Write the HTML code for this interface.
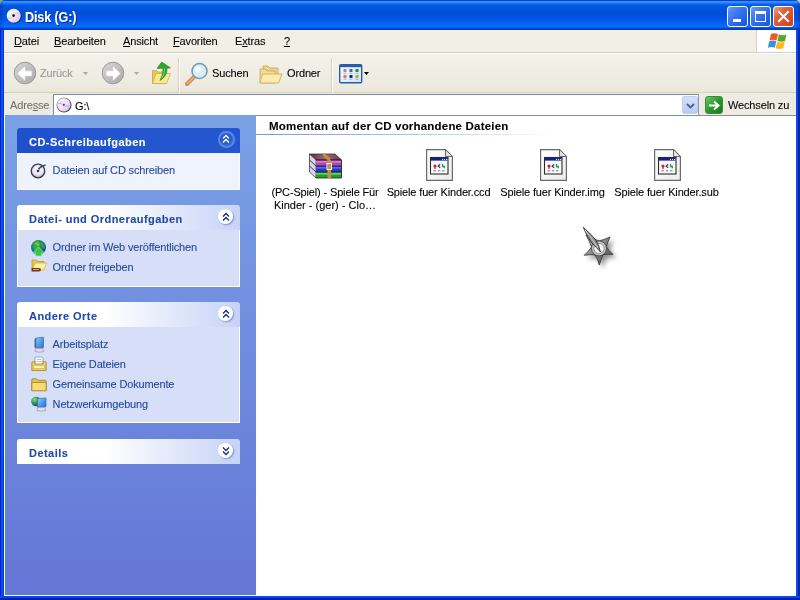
<!DOCTYPE html>
<html><head><meta charset="utf-8">
<style>
*{margin:0;padding:0;box-sizing:border-box}
html,body{width:800px;height:600px;overflow:hidden;background:#fff}
body{font-family:"Liberation Sans",sans-serif;font-size:11px;letter-spacing:-0.15px;position:relative;color:#000;-webkit-text-stroke:0.08px currentColor}
.a{position:absolute}
svg{position:absolute;overflow:visible}
#title{left:0;top:0;width:800px;height:30px;background:linear-gradient(90deg,rgba(0,20,120,.25) 0,rgba(0,0,0,0) 4px,rgba(0,0,0,0) 796px,rgba(0,20,120,.3) 800px),linear-gradient(#0a40c8 0,#0a40c8 1px,#3a90ff 1px,#3088ff 2.5px,#0a68f0 4px,#0055e0 6px,#004fd8 14px,#0055e8 19px,#0066fa 24px,#0a70ff 27px,#0848d0 28px,#003cc0 30px);border-radius:5px 5px 0 0}
#ttext{left:25px;top:9px;color:#fff;font-weight:bold;font-size:14px;text-shadow:1px 1px 0 #0a2a9a;transform:scaleX(0.9);transform-origin:0 0;white-space:nowrap}
#frameL{left:0;top:30px;width:4px;height:570px;background:linear-gradient(90deg,#0024c4 0,#0024c4 1px,#0650f2 1px,#0650f2 3px,#0838d0 3px)}
#frameR{left:796px;top:30px;width:4px;height:570px;background:linear-gradient(90deg,#0650f2 0,#0846e6 2px,#0024aa 2px)}
#frameB{left:0;top:596px;width:800px;height:4px;background:linear-gradient(#0a4cf0 0,#0642e2 2px,#0022b0 2px)}
.tb{position:absolute;top:6px;width:21px;height:21px;border:1px solid #fff;border-radius:3px}
#menu{left:4px;top:30px;width:792px;height:23px;background:#f1efe6;border-bottom:1px solid #d6d2c2}
.mi{position:absolute;top:5px}
#logo{left:756px;top:30px;width:40px;height:22px;background:#fff;border-left:1px solid #d6d2c2}
#tool{left:4px;top:53px;width:792px;height:40px;background:linear-gradient(#f3f1e9,#efede3 60%,#ebe8da);border-bottom:1px solid #d6d2c2;border-top:1px solid #fff}
.sep{position:absolute;top:4px;width:2px;height:35px;border-left:1px solid #d5d1bf;border-right:1px solid #fff}
.tt{position:absolute;top:13px}
#addr{left:4px;top:93px;width:792px;height:23px;background:#eeece2}
#addrbox{left:53px;top:94px;width:646px;height:22px;background:#fff;border:1px solid #7f9db9;border-top-color:#7a8a9a;border-left-color:#7a8a9a}
#panel{left:4px;top:115px;width:252px;height:481px;border-left:1px solid #f4f8ff;border-bottom:1px solid #f4f8ff;background:linear-gradient(#7aa1e6,#6476d6)}
#content{left:256px;top:115px;width:540px;height:481px;background:#fff;border-top:1px solid #8c8c8c}
.box{position:absolute;left:17px;width:223px}
.hdr{position:absolute;left:0;top:0;width:223px;height:25px;border-radius:3px 3px 0 0;background:linear-gradient(90deg,#fff 0,#fff 40%,#c6d3f7 100%)}
.hdr span{position:absolute;left:12px;top:8px;font-weight:bold;color:#1f48a8;font-size:11px;letter-spacing:0.45px;white-space:nowrap}
.body{position:absolute;left:0;top:25px;width:223px;background:#d6dff7;border:1px solid #fff;border-top:none}
.it{position:absolute;left:34.6px;color:#22479e;white-space:nowrap;margin-top:1px}
.ic{position:absolute;left:13px}
.chev{position:absolute;left:201px;top:3.5px;width:15px;height:15px;border-radius:50%;background:radial-gradient(circle at 40% 35%,#fff 55%,#e4e9f7 100%);box-shadow:1px 1px 1.5px rgba(70,90,150,.55)}
.lbl{position:absolute;white-space:nowrap;text-align:center}
</style></head><body><div id="root" style="position:absolute;left:0;top:0;width:800px;height:600px;will-change:transform">
<div class="a" style="left:0;top:0;width:6px;height:6px;background:#8aa874"></div><div class="a" style="left:794px;top:0;width:6px;height:6px;background:#b4d89a"></div>
<div id="title" class="a"></div>
<!-- title CD icon -->
<svg style="left:6px;top:8px" width="16" height="16" viewBox="0 0 16 16">
 <defs><radialGradient id="cd1" cx="50%" cy="40%" r="60%"><stop offset="0" stop-color="#fff"/><stop offset=".6" stop-color="#e8e4f4"/><stop offset="1" stop-color="#b6b0d0"/></radialGradient>
 <linearGradient id="cdt" x1="0" y1="0" x2="1" y2="1"><stop offset="0" stop-color="#ffffff"/><stop offset=".4" stop-color="#f0e8f8"/><stop offset=".6" stop-color="#f4dcec"/><stop offset="1" stop-color="#c8c0e0"/></linearGradient></defs>
 <circle cx="8.3" cy="8.3" r="7.4" fill="#0a2a80" opacity=".7"/>
 <circle cx="7.7" cy="7.7" r="7" fill="url(#cdt)"/>
 <path d="M2 9 Q5 12 8 8 Q11 4 14 6" stroke="#d0c8ec" stroke-width="1.4" fill="none" opacity=".7"/>
 <circle cx="7.6" cy="7.6" r="2.3" fill="#e4e0f0"/><circle cx="7.6" cy="7.6" r="1.3" fill="#111"/>
</svg>
<div id="ttext" class="a">Disk (G:)</div>
<!-- title buttons -->
<div class="tb" style="left:727px;background:linear-gradient(135deg,#6a9cff 0,#3f7af4 35%,#2662e8 70%,#1d55dc 100%)"><div class="a" style="left:5px;top:12px;width:8px;height:3px;background:#fff"></div></div>
<div class="tb" style="left:750px;background:linear-gradient(135deg,#6a9cff 0,#3f7af4 35%,#2662e8 70%,#1d55dc 100%)"><div class="a" style="left:4px;top:4px;width:11px;height:11px;border:1px solid #fff;border-top:3px solid #fff"></div></div>
<div class="tb" style="left:773px;background:linear-gradient(135deg,#f0a080 0,#e2603a 35%,#d4502a 70%,#c44020 100%)">
 <svg style="left:4px;top:4px" width="11" height="11" viewBox="0 0 11 11"><path d="M1 1L10 10M10 1L1 10" stroke="#fff" stroke-width="2" stroke-linecap="square"/></svg>
</div>
<div id="frameL" class="a"></div>
<div id="frameR" class="a"></div>
<div id="frameB" class="a"></div>

<div id="menu" class="a">
 <span class="mi" style="left:10px"><u>D</u>atei</span>
 <span class="mi" style="left:50px"><u>B</u>earbeiten</span>
 <span class="mi" style="left:119px"><u>A</u>nsicht</span>
 <span class="mi" style="left:169px"><u>F</u>avoriten</span>
 <span class="mi" style="left:231px">E<u>x</u>tras</span>
 <span class="mi" style="left:280px"><u>?</u></span>
</div>
<div id="logo" class="a">
 <svg style="left:10px;top:2px" width="22" height="18" viewBox="0 0 22 18">
  <path d="M4 2 Q7 0.5 11 2 L9.5 8.5 Q6 7 2.5 8.5Z" fill="#f05a22"/>
  <path d="M11.8 2.3 Q15.5 4 19.5 2.5 L18 9 Q14.5 10.5 10.5 9Z" fill="#55a82c"/>
  <path d="M2.3 9.3 Q6 7.8 9.3 9.3 L7.8 15.8 Q4.5 14.3 0.8 15.8Z" fill="#3e8ee6"/>
  <path d="M10.2 9.8 Q14 11.3 17.8 9.8 L16.3 16.3 Q12.5 17.8 8.7 16.3Z" fill="#fbbc1a"/>
 </svg>
</div>

<div id="tool" class="a">
 <!-- back -->
 <svg style="left:9px;top:7px" width="24" height="24" viewBox="0 0 24 24">
  <defs><linearGradient id="gb" x1="0" y1="0" x2="1" y2="1"><stop offset="0" stop-color="#d8d8d8"/><stop offset=".5" stop-color="#c0c0c0"/><stop offset="1" stop-color="#a8a8a8"/></linearGradient></defs>
  <circle cx="12" cy="12" r="10.8" fill="url(#gb)" stroke="#9a9a9a" stroke-width="1"/>
  <path d="M4.8 12.5 L11.8 5.8 V10.2 H18.3 V14.8 H11.8 V19.2 Z" fill="#fff" stroke="#fff" stroke-width=".6" stroke-linejoin="round"/>
 </svg>
 <span class="tt" style="left:36px;color:#999">Zurück</span>
 <svg style="left:79px;top:18px" width="5" height="3"><path d="M0 0H5L2.5 3Z" fill="#a8a8a8"/></svg>
 <!-- forward -->
 <svg style="left:97px;top:7px" width="24" height="24" viewBox="0 0 24 24">
  <circle cx="12" cy="12" r="10.8" fill="url(#gb)" stroke="#9a9a9a" stroke-width="1"/>
  <path d="M19.2 12.5 L12.2 5.8 V10.2 H5.7 V14.8 H12.2 V19.2 Z" fill="#fff" stroke="#fff" stroke-width=".6" stroke-linejoin="round"/>
 </svg>
 <svg style="left:130px;top:18px" width="5" height="3"><path d="M0 0H5L2.5 3Z" fill="#a8a8a8"/></svg>
 <!-- up folder -->
 <svg style="left:147px;top:7px" width="22" height="24" viewBox="0 0 22 24">
  <path d="M1.5 9.5 H5.5 L7 11 H14 V22.5 H1.5Z" fill="#e6c858" stroke="#c0a23a" stroke-width=".7"/>
  <path d="M1.5 22.5 L5 12.5 H19.5 L15.5 22.5Z" fill="#fbe890" stroke="#c8aa48" stroke-width=".7"/>
  <path d="M10.7 1 L19.5 7 L16 7 Q16.5 15 9 19.5 Q12.5 13 12 7.3 L6 7.5 Z" fill="#2ca82a" stroke="#1c7a1a" stroke-width=".6"/>
  <path d="M13.5 7.5 Q14 13 11 17" stroke="#7ad86e" stroke-width="1" fill="none"/>
 </svg>
 <div class="sep" style="left:174px"></div>
 <!-- search -->
 <svg style="left:180px;top:8px" width="26" height="24" viewBox="0 0 26 24">
  <path d="M3 22 L10 15" stroke="#d8884a" stroke-width="4" stroke-linecap="round"/>
  <path d="M3.5 21.5 L9.5 15.5" stroke="#f0b080" stroke-width="1.5" stroke-linecap="round"/>
  <circle cx="15.5" cy="9" r="7.5" fill="#d8eefa" stroke="#7a9ab0" stroke-width="1.6"/>
  <circle cx="14" cy="7.5" r="3" fill="#fff" opacity=".8"/>
 </svg>
 <span class="tt" style="left:208px">Suchen</span>
 <!-- folders -->
 <svg style="left:255px;top:9px" width="24" height="22" viewBox="0 0 24 22">
  <path d="M4 3 H9 L11 5 H19 V17 H4Z" fill="#e9d48a" stroke="#c2a650" stroke-width=".8"/>
  <path d="M1 6 H6 L8 8 H16 V20 H1Z" fill="#efdc96" stroke="#c2a650" stroke-width=".8"/>
  <path d="M1 20 L3.5 11 H23 L19.5 20Z" fill="#fbeaa8" stroke="#c8ac58" stroke-width=".8"/>
 </svg>
 <span class="tt" style="left:283px">Ordner</span>
 <div class="sep" style="left:327px"></div>
 <!-- views -->
 <svg style="left:335px;top:10px" width="24" height="20" viewBox="0 0 24 20">
  <defs><linearGradient id="vg" x1="0" y1="0" x2="1" y2="1"><stop offset="0" stop-color="#ffffff"/><stop offset="1" stop-color="#c8e4ff"/></linearGradient></defs>
  <rect x=".7" y=".7" width="22" height="18" rx="1.2" fill="url(#vg)" stroke="#2a5aa8" stroke-width="1.4"/>
  <rect x="1" y="1" width="21.4" height="2.2" fill="#2a5aa8"/>
  <rect x="4.5" y="5" width="3" height="3" fill="#9a90b8"/><rect x="10.5" y="5" width="3" height="3" fill="#3a6ac0"/><rect x="16.5" y="5" width="3" height="3" fill="#2a8a2a"/>
  <rect x="4.5" y="11" width="3" height="3" fill="#e87a5a"/><rect x="10.5" y="11" width="3" height="3" fill="#1a2a7a"/><rect x="16.5" y="11" width="3" height="3" fill="#b8a830"/>
  <path d="M4.5 9.3h3M10.5 9.3h3M16.5 9.3h3M4.5 15.3h3M10.5 15.3h3M16.5 15.3h3" stroke="#a0a0b0" stroke-width=".8"/>
 </svg>
 <svg style="left:360px;top:18px" width="5" height="3"><path d="M0 0H5L2.5 3Z" fill="#000"/></svg>
</div>

<div id="addr" class="a">
 <span class="a" style="left:6px;top:6px;color:#707070">Adre<u>s</u>se</span>
</div>
<div id="addrbox" class="a">
 <svg style="left:2px;top:2px" width="16" height="16" viewBox="0 0 16 16">
  <defs><linearGradient id="cdo" x1="0" y1="0" x2="1" y2="1"><stop offset="0" stop-color="#b0b0c0"/><stop offset=".5" stop-color="#707080"/><stop offset="1" stop-color="#303040"/></linearGradient></defs>
  <circle cx="8" cy="8" r="7.6" fill="url(#cdo)"/>
  <circle cx="7.8" cy="7.8" r="6.6" fill="url(#cdt)"/>
  <path d="M1.5 7 Q5 5 8 8 Q11 11 14.5 8" stroke="#b8b0e0" stroke-width="1.6" fill="none" opacity=".8"/>
  <circle cx="7.8" cy="7.8" r="2" fill="#ece8f8"/><circle cx="7.8" cy="7.8" r="1.1" fill="#3a3a7a"/>
 </svg>
 <span class="a" style="left:21px;top:5px;font-size:11px">G:\</span>
 <div class="a" style="left:628px;top:1px;width:16px;height:18px;background:linear-gradient(#d4e0fb,#b8cbf6);border:1px solid #c0d0f4;border-radius:2px">
  <svg style="left:3px;top:6px" width="9" height="6" viewBox="0 0 9 6"><path d="M1 1L4.5 4.5L8 1" stroke="#4d6185" stroke-width="1.8" fill="none"/></svg>
 </div>
</div>
<div class="a" style="left:705px;top:96px;width:18px;height:18px;border-radius:3px;background:linear-gradient(135deg,#6cc86c,#2a9a2a 50%,#1a7a1a);border:1px solid #3a8a3a">
 <svg style="left:2px;top:3px" width="13" height="11" viewBox="0 0 13 11"><path d="M1 5.5H10M6 1.5L10.5 5.5L6 9.5" stroke="#fff" stroke-width="2" fill="none"/></svg>
</div>
<span class="a" style="left:728px;top:99px">Wechseln zu</span>

<div id="panel" class="a"></div>
<div id="content" class="a"></div>

<!-- box 1 -->
<div class="box" style="top:128px">
 <div class="hdr" style="background:linear-gradient(90deg,#1f50cc,#2456d0 60%,#2456d0)"><span style="color:#fff">CD-Schreibaufgaben</span>
  <div class="chev" style="background:radial-gradient(circle at 45% 40%,#2a5ad0 45%,#4a78e0 100%);box-shadow:none;border:2px solid #5a88e8;left:201px;top:3px;width:16.5px;height:16.5px"></div>
  <svg style="left:204.5px;top:5.5px" width="8" height="9" viewBox="0 0 8 9"><path d="M1 4.5L4 1.5L7 4.5M1 8.5L4 5.5L7 8.5" stroke="#fff" stroke-width="1.35" fill="none"/></svg>
 </div>
 <div class="body" style="height:37px;background:#eff3ff">
  <svg class="ic" style="top:9px" width="17" height="17" viewBox="0 0 17 17">
   <circle cx="7" cy="9" r="6.8" fill="url(#cd1)" stroke="#3a3a4a" stroke-width="1.3"/>
   <circle cx="7" cy="9" r="1.3" fill="#334"/>
   <path d="M7.5 7.5 Q9 4.5 14.5 3" stroke="#3a4a6a" stroke-width="1.8" fill="none"/>
  </svg>
  <span class="it" style="top:10px">Dateien auf CD schreiben</span>
 </div>
</div>
<div class="box" style="top:205px">
 <div class="hdr"><span>Datei- und Ordneraufgaben</span><div class="chev"></div>
  <svg style="left:204.5px;top:6.5px" width="8" height="9" viewBox="0 0 8 9"><path d="M1 4.5L4 1.5L7 4.5M1 8.5L4 5.5L7 8.5" stroke="#18286a" stroke-width="1.25" fill="none"/></svg>
 </div>
 <div class="body" style="height:57px">
  <svg class="ic" style="top:10px" width="16" height="16" viewBox="0 0 16 16">
   <defs><radialGradient id="gl" cx="40%" cy="30%" r="70%"><stop offset="0" stop-color="#8ad878"/><stop offset=".35" stop-color="#2a9a3a"/><stop offset=".65" stop-color="#1a6ab0"/><stop offset="1" stop-color="#0a3a8a"/></radialGradient></defs>
   <circle cx="7.5" cy="7.5" r="7.5" fill="url(#gl)"/>
   <path d="M2 5 Q5 3 7 6 Q6 9 3 10Z M10 2 Q14 4 14 9 Q11 8 10 5Z" fill="#3aaa3a" opacity=".8"/>
   <path d="M7.5 7 L13.5 13 H10.5 V16 H4.5 V13 H1.5Z" fill="#3ac83a" stroke="#9ae8c8" stroke-width=".7"/>
  </svg>
  <span class="it" style="top:10px">Ordner im Web veröffentlichen</span>
  <svg class="ic" style="top:28px" width="16" height="15" viewBox="0 0 16 15">
   <path d="M1 2 H5.5 L7 3.5 H13 V11 H1Z" fill="#e8c848" stroke="#a8862a" stroke-width=".6"/>
   <path d="M1.5 12 L4 5 H15.5 L13 12Z" fill="#fff0a0" stroke="#c8a040" stroke-width=".6"/>
   <path d="M0.5 10 H8 Q10 10 10 11.5 Q10 13.5 7.5 13.5 H0.5Z" fill="#6a3a1a"/>
   <path d="M2 11.5 H8" stroke="#e8a060" stroke-width="1"/>
  </svg>
  <span class="it" style="top:30px">Ordner freigeben</span>
 </div>
</div>
<div class="box" style="top:302px">
 <div class="hdr"><span>Andere Orte</span><div class="chev"></div>
  <svg style="left:204.5px;top:6.5px" width="8" height="9" viewBox="0 0 8 9"><path d="M1 4.5L4 1.5L7 4.5M1 8.5L4 5.5L7 8.5" stroke="#18286a" stroke-width="1.25" fill="none"/></svg>
 </div>
 <div class="body" style="height:96px">
  <svg class="ic" style="top:9px" width="16" height="17" viewBox="0 0 16 17">
   <defs><linearGradient id="scr" x1="0" y1="0" x2="1" y2="1"><stop offset="0" stop-color="#8ad0ff"/><stop offset="1" stop-color="#1a70d8"/></linearGradient></defs>
   <path d="M5 2 L12.5 1.2 V11.5 L5 12 Z" fill="url(#scr)" stroke="#3a68a8" stroke-width=".7"/>
   <path d="M3.5 3 L5 2 V12 L3.5 11.5Z" fill="#4a6a9a"/>
   <path d="M4.5 12.5 H12 L12.5 15.5 Q8.5 17 4 15.5Z" fill="#e8d8ec" stroke="#9a7aa0" stroke-width=".6"/>
  </svg>
  <span class="it" style="top:10px">Arbeitsplatz</span>
  <svg class="ic" style="top:29px" width="16" height="16" viewBox="0 0 16 16">
   <path d="M4 1 H11 L12 2 V9 H4Z" fill="#fff" stroke="#7a8ab0" stroke-width=".7"/>
   <path d="M5.5 3.5H10.5M5.5 5.5H10.5" stroke="#9aaac8" stroke-width=".7"/>
   <path d="M0.8 7 Q0.8 5.5 2.5 5.5 H4 V8 H12 V5.5 H13.5 Q15.2 5.5 15.2 7 V14.5 H0.8Z" fill="#f0cc58" stroke="#a8842a" stroke-width=".8"/>
   <path d="M2.5 9.5 H13.5 V12.5 H2.5Z" fill="#fff0b8" stroke="#c8a848" stroke-width=".5"/>
  </svg>
  <span class="it" style="top:30px">Eigene Dateien</span>
  <svg class="ic" style="top:51px" width="16" height="14" viewBox="0 0 16 14">
   <path d="M0.8 1.5 Q0.8 0.8 1.5 0.8 H5.5 L7 2.3 H14.5 Q15.2 2.3 15.2 3 V12.5 H0.8Z" fill="#e8c050" stroke="#a0802a" stroke-width=".8"/>
   <path d="M0.8 4.5 H15.2 V12.8 H0.8Z" fill="#f8dc70" stroke="#a0802a" stroke-width=".8"/>
  </svg>
  <span class="it" style="top:50px">Gemeinsame Dokumente</span>
  <svg class="ic" style="top:68px" width="16" height="17" viewBox="0 0 16 17">
   <defs><radialGradient id="ng" cx="35%" cy="30%" r="70%"><stop offset="0" stop-color="#8ae07a"/><stop offset=".55" stop-color="#2a9a4a"/><stop offset="1" stop-color="#1a4a9a"/></radialGradient></defs>
   <circle cx="5" cy="6.5" r="4.8" fill="url(#ng)"/>
   <path d="M6.5 3.5 L15 3 V11.5 L6.5 12Z" fill="url(#scr)" stroke="#3a68a8" stroke-width=".7"/>
   <path d="M6.5 12.5 H14 L14.5 15.5 Q10.5 17 6 15.5Z" fill="#e0e0ec" stroke="#8a8aa0" stroke-width=".6"/>
  </svg>
  <span class="it" style="top:70px">Netzwerkumgebung</span>
 </div>
</div>
<div class="box" style="top:439px">
 <div class="hdr"><span>Details</span><div class="chev"></div>
  <svg style="left:204.5px;top:6.5px" width="8" height="9" viewBox="0 0 8 9"><path d="M1 1.5L4 4.5L7 1.5M1 5.5L4 8.5L7 5.5" stroke="#18286a" stroke-width="1.25" fill="none"/></svg>
 </div>
</div>

<!-- content -->
<span class="a" style="left:269px;top:120px;font-weight:bold;font-size:11.5px;letter-spacing:0.2px;white-space:nowrap">Momentan auf der CD vorhandene Dateien</span>
<div class="a" style="left:256px;top:134px;width:300px;height:1px;background:linear-gradient(90deg,#7a9ad8,#a8bce8 45%,#fff)"></div>

<!-- rar icon -->
<svg style="left:309px;top:153px" width="33" height="26" viewBox="0 0 33 26">
 <defs><linearGradient id="rt" x1="0" y1="0" x2="1" y2="0"><stop offset="0" stop-color="#5a3040"/><stop offset=".5" stop-color="#9a6a7a"/><stop offset="1" stop-color="#6a3a50"/></linearGradient></defs>
 <path d="M0.5 1 H26 L32.5 7 H7 Z" fill="url(#rt)" stroke="#2a1a20" stroke-width=".7"/>
 <path d="M0.5 1 L7 7 V25 L0.5 19 Z" fill="#dcd4ec" stroke="#2a2a3a" stroke-width=".7"/>
 <path d="M0.5 7 L7 13 M0.5 13 L7 19" stroke="#2a2a3a" stroke-width=".9"/>
 <rect x="7" y="7" width="25.5" height="6" fill="#b048b0"/>
 <rect x="7" y="8" width="25.5" height="1.6" fill="#d880d0"/>
 <rect x="7" y="13" width="25.5" height="6" fill="#2838c8"/>
 <rect x="7" y="14" width="25.5" height="1.6" fill="#5a6af0"/>
 <rect x="7" y="19" width="25.5" height="6" fill="#22a02a"/>
 <rect x="7" y="20" width="25.5" height="1.6" fill="#6ad06a"/>
 <path d="M7 7H32.5M7 13H32.5M7 19H32.5M7 25H32.5M32.5 7V25" stroke="#1a1a2a" stroke-width=".8"/>
 <path d="M14.5 1 L20.5 7" stroke="#c8903a" stroke-width="3"/>
 <rect x="18.5" y="7" width="3.5" height="18" fill="#c8903a"/>
 <rect x="18" y="10.5" width="4.5" height="6" fill="none" stroke="#f0f0f0" stroke-width="1"/>
</svg>
<div class="lbl" style="left:266px;top:186px;width:118px;line-height:13px">(PC-Spiel) - Spiele Für<br><span style="letter-spacing:0">Kinder - (ger) - Clo…</span></div>

<!-- file icons -->
<svg style="left:426px;top:149px" width="27" height="32" viewBox="0 0 27 32" id="fileic">
 <defs><linearGradient id="pg" x1="0" y1="0" x2="1" y2="1"><stop offset="0" stop-color="#fff"/><stop offset="1" stop-color="#ececec"/></linearGradient></defs>
 <path d="M.6 .6H19.5L26.4 7.5V31.4H.6Z" fill="url(#pg)" stroke="#6a6a6a" stroke-width="1.2"/>
 <path d="M19.5 .6V7.5H26.4Z" fill="#e4e4e4" stroke="#6a6a6a" stroke-width="1"/>
 <rect x="4.5" y="8.5" width="17.5" height="16.5" fill="#fafafa" stroke="#2a2a2a" stroke-width="1.1"/>
 <rect x="5" y="9" width="16.5" height="2.6" fill="#14208a"/>
 <circle cx="16.5" cy="10.3" r=".6" fill="#fff"/><circle cx="18.5" cy="10.3" r=".6" fill="#fff"/><circle cx="20.5" cy="10.3" r=".6" fill="#fff"/>
 <circle cx="9" cy="17" r="1.6" fill="#d02020"/><path d="M9 18v2" stroke="#d02020" stroke-width="1.2"/>
 <path d="M14 15.2L12.2 17.2L14.2 18.8" stroke="#2040c0" stroke-width="1.3" fill="none"/>
 <path d="M16.5 15v2.5h1.8v1.8" stroke="#20a040" stroke-width="1.4" fill="none"/>
 <path d="M7.5 21.8h2.5M11.8 21.8h2.5M16 21.8h2.5" stroke="#7a7a7a" stroke-width="1"/>
</svg>
<div class="lbl" style="left:385px;top:186px;width:107px">Spiele fuer Kinder.ccd</div>
<svg style="left:540px;top:149px" width="27" height="32" viewBox="0 0 27 32"><use href="#fileic"/></svg>
<div class="lbl" style="left:499px;top:186px;width:107px">Spiele fuer Kinder.img</div>
<svg style="left:654px;top:149px" width="27" height="32" viewBox="0 0 27 32"><use href="#fileic"/></svg>
<div class="lbl" style="left:613px;top:186px;width:107px">Spiele fuer Kinder.sub</div>

<!-- cursor -->
<svg style="left:575px;top:222px" width="50" height="50" viewBox="0 0 50 50">
 <defs><filter id="blur" x="-50%" y="-50%" width="200%" height="200%"><feGaussianBlur stdDeviation="2.8"/></filter>
 <linearGradient id="stg" x1="0" y1="0" x2="1" y2="1"><stop offset="0" stop-color="#d8d8d8"/><stop offset=".45" stop-color="#888"/><stop offset="1" stop-color="#4a4a4a"/></linearGradient></defs>
 <g transform="translate(3.5 3.5)" opacity=".45" filter="url(#blur)"><path d="M35.0 15.0 Q32.3 20.6 31.4 24.9 Q33.6 28.4 38.0 32.4 Q32.2 31.9 28.2 32.6 Q26.1 36.7 24.4 43.0 Q22.4 36.7 20.0 32.8 Q15.6 32.4 9.2 33.3 Q14.0 28.9 16.6 25.0 Q14.8 19.8 11.0 13.0 Q18.1 17.0 24.0 18.9 Q28.9 17.9 35.0 15.0Z" fill="#000"/></g>
 <path d="M35.0 15.0 Q32.3 20.6 31.4 24.9 Q33.6 28.4 38.0 32.4 Q32.2 31.9 28.2 32.6 Q26.1 36.7 24.4 43.0 Q22.4 36.7 20.0 32.8 Q15.6 32.4 9.2 33.3 Q14.0 28.9 16.6 25.0 Q14.8 19.8 11.0 13.0 Q18.1 17.0 24.0 18.9 Q28.9 17.9 35.0 15.0Z" fill="url(#stg)" stroke="#222" stroke-width=".7" stroke-linejoin="round"/>
 <circle cx="24" cy="26.4" r="6.2" fill="#fafafa" stroke="#c4c4c4" stroke-width="2.4"/>
 <circle cx="24" cy="26.4" r="7.5" fill="none" stroke="#333" stroke-width=".7"/>
 <circle cx="24" cy="26.4" r="5" fill="none" stroke="#555" stroke-width=".5"/>
 <path d="M8.3 5.3 Q15 11 20 17 Q24 22 25.5 30 Q21 25 16 20 Q11 13 8.3 5.3Z" fill="#8a8a8a" stroke="#1a1a1a" stroke-width=".7"/>
 <path d="M10 8 Q16 15 23 26" stroke="#e8e8e8" stroke-width=".8" fill="none"/>
</svg>
</div></body></html>
